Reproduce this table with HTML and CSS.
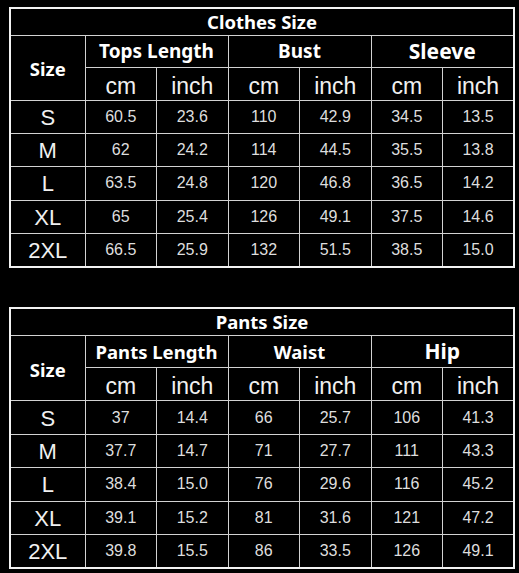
FILE: index.html
```html
<!DOCTYPE html>
<html>
<head>
<meta charset="utf-8">
<link rel="stylesheet" href="styles.css">
</head>
<body>
<div class="page">
  <table class="chart">
    <colgroup>
      <col class="c-size"><col class="c-v"><col class="c-v"><col class="c-v"><col class="c-v"><col class="c-v"><col class="c-v">
    </colgroup>
    <tr class="r-title"><th colspan="7" class="title">Clothes Size</th></tr>
    <tr class="r-h1">
      <th rowspan="2" class="size-h">Size</th>
      <th colspan="2" class="grp">Tops Length</th>
      <th colspan="2" class="grp">Bust</th>
      <th colspan="2" class="grp big">Sleeve</th>
    </tr>
    <tr class="r-h2">
      <td class="unit">cm</td><td class="unit">inch</td>
      <td class="unit">cm</td><td class="unit">inch</td>
      <td class="unit">cm</td><td class="unit">inch</td>
    </tr>
    <tr class="r-d"><td class="sz">S</td><td>60.5</td><td>23.6</td><td>110</td><td>42.9</td><td>34.5</td><td>13.5</td></tr>
    <tr class="r-d"><td class="sz">M</td><td>62</td><td>24.2</td><td>114</td><td>44.5</td><td>35.5</td><td>13.8</td></tr>
    <tr class="r-d"><td class="sz">L</td><td>63.5</td><td>24.8</td><td>120</td><td>46.8</td><td>36.5</td><td>14.2</td></tr>
    <tr class="r-d"><td class="sz">XL</td><td>65</td><td>25.4</td><td>126</td><td>49.1</td><td>37.5</td><td>14.6</td></tr>
    <tr class="r-d"><td class="sz">2XL</td><td>66.5</td><td>25.9</td><td>132</td><td>51.5</td><td>38.5</td><td>15.0</td></tr>
  </table>

  <table class="chart chart-b">
    <colgroup>
      <col class="c-size"><col class="c-v"><col class="c-v"><col class="c-v"><col class="c-v"><col class="c-v"><col class="c-v">
    </colgroup>
    <tr class="r-title"><th colspan="7" class="title">Pants Size</th></tr>
    <tr class="r-h1">
      <th rowspan="2" class="size-h">Size</th>
      <th colspan="2" class="grp">Pants Length</th>
      <th colspan="2" class="grp">Waist</th>
      <th colspan="2" class="grp big">Hip</th>
    </tr>
    <tr class="r-h2">
      <td class="unit">cm</td><td class="unit">inch</td>
      <td class="unit">cm</td><td class="unit">inch</td>
      <td class="unit">cm</td><td class="unit">inch</td>
    </tr>
    <tr class="r-d"><td class="sz">S</td><td>37</td><td>14.4</td><td>66</td><td>25.7</td><td>106</td><td>41.3</td></tr>
    <tr class="r-d"><td class="sz">M</td><td>37.7</td><td>14.7</td><td>71</td><td>27.7</td><td>111</td><td>43.3</td></tr>
    <tr class="r-d"><td class="sz">L</td><td>38.4</td><td>15.0</td><td>76</td><td>29.6</td><td>116</td><td>45.2</td></tr>
    <tr class="r-d"><td class="sz">XL</td><td>39.1</td><td>15.2</td><td>81</td><td>31.6</td><td>121</td><td>47.2</td></tr>
    <tr class="r-d"><td class="sz">2XL</td><td>39.8</td><td>15.5</td><td>86</td><td>33.5</td><td>126</td><td>49.1</td></tr>
  </table>
</div>
</body>
</html>
```

FILE: styles.css
```css
html, body {
  margin: 0;
  padding: 0;
  background: #000;
}

.page {
  padding: 7px 0 0 9px;
  display: flex;
  flex-direction: column;
  gap: 39px;
}

.chart {
  border-collapse: collapse;
  table-layout: fixed;
  width: 505px;
  border: 2px solid #f2f2f2;
  color: #dedede;
  font-family: "Liberation Sans", Arial, sans-serif;
}

.c-size { width: 75px; }
.c-v { width: 71.5px; }

.chart th,
.chart td {
  border: 1px solid #d2d2d2;
  padding: 0;
  text-align: center;
  vertical-align: middle;
  font-size: 16px;
  line-height: 1;
}

.chart th {
  font-family: "Noto Sans", "Open Sans", sans-serif;
  font-weight: bold;
  color: #fff;
}

.r-title th { height: 26px; font-size: 18.5px; }
.chart-b .r-title th { height: 26.5px; }
.r-h1 th { height: 31px; font-size: 19px; }
.chart-b .r-h1 th { font-size: 18.5px; }
.chart .r-h1 th.big { font-size: 21px; }
.r-h1 th.size-h { font-size: 18.5px; padding-top: 3px; height: auto; }
.r-h2 td { height: 32px; }
.chart .r-h2 td.unit { height: 27px; }
.r-d td { height: 32.2px; }
.chart-b .r-d td { height: 32.4px; }
.chart .r-d td.sz { height: 30.2px; }
.chart-b .r-d td.sz { height: 30.4px; }

.chart td.unit {
  font-size: 23px;
  color: #f0f0f0;
  padding-top: 5px;
}

.chart td.sz {
  font-size: 22px;
  color: #f0f0f0;
  padding-top: 2px;
}
```
